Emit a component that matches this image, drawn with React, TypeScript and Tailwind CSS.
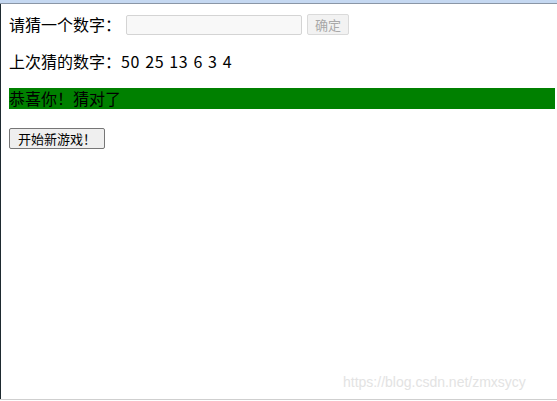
import React from "react";

export default function App() {
  const cjk = "font-['Microsoft_YaHei','Noto_Sans_CJK_SC',sans-serif]";
  return (
    <div className={`relative w-[557px] h-[401px] bg-white overflow-hidden text-black ${cjk}`}>
      <div className="h-[3px] bg-[#c5d8f1]" />
      <div className="h-px bg-[#8a96a6]" />
      <div className="flex h-[395px]">
        <div className="w-px bg-[#1e2a30]" />
        <div className="flex-1 pl-2 pt-[9px] flex flex-col">
          <div className="flex items-center h-[22px] text-[16px] leading-[21px]">
            <span>请猜一个数字：</span>
            <input
              disabled
              className="ml-[5px] w-[176px] h-[20px] mt-[1px] border border-[#d4d4d4] bg-[#f8f8f8] rounded-[2px]"
            />
            <button
              disabled
              className="ml-[5px] w-[42px] h-[21px] border border-[#dadada] bg-[#f2f2f2] rounded-[2px] text-[13px] leading-[19px] text-[#a8a8a8]"
            >
              确定
            </button>
          </div>
          <p className="mt-4 text-[16px] leading-[21px] h-[21px]">
            上次猜的数字：<span className="tracking-[0.6px] [word-spacing:1px]">50 25 13 6 3 4</span>
          </p>
          <p className="mt-4 w-[546px] h-[21px] bg-[#008000] text-[16px] leading-[21px]">
            恭喜你！猜对了
          </p>
          <div className="mt-4">
            <button className="w-[96px] h-[21px] border border-[#767676] bg-[#efefef] rounded-[2px] text-[13px] leading-[19px] text-black">
              开始新游戏！
            </button>
          </div>
        </div>
      </div>
      <div className="h-px bg-[#cfcfcf]" />
      <div className="absolute left-[343px] top-[374px] text-[14px] leading-[16px] text-[#e3e3e3] font-['Liberation_Sans',Arial,sans-serif]">
        https://blog.csdn.net/zmxsycy
      </div>
    </div>
  );
}
